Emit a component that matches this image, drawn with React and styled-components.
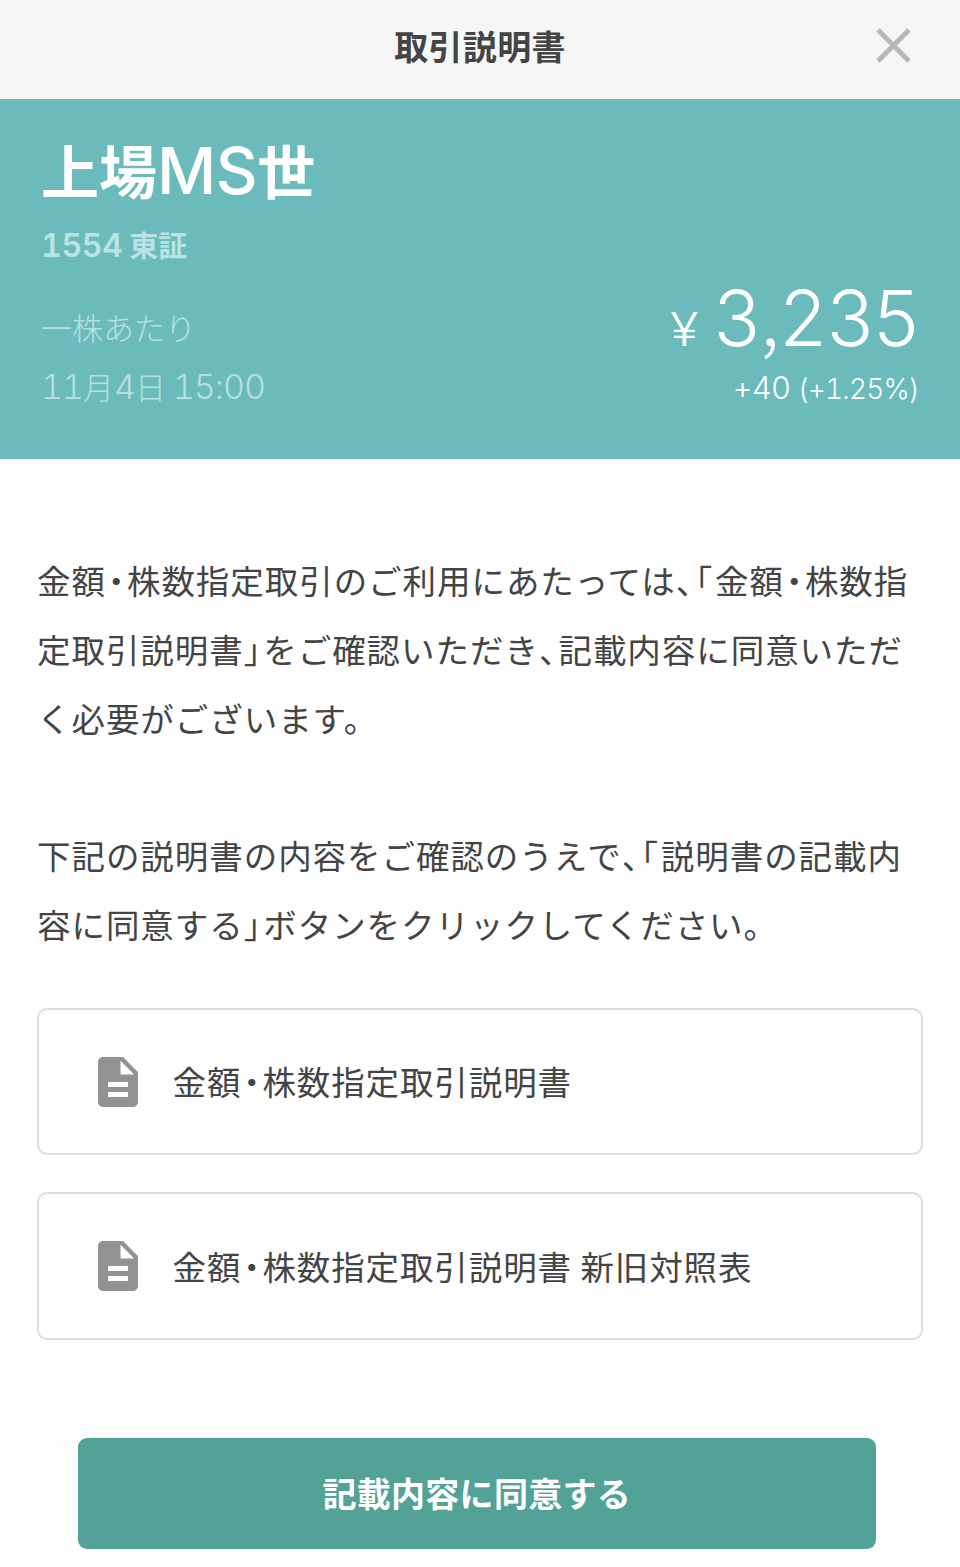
import styled, { createGlobalStyle } from 'styled-components';
import { MdClose, MdDescription } from 'react-icons/md';

const documents = [
    '金額・株数指定取引説明書',
    '金額・株数指定取引説明書 新旧対照表',
];

// Brackets, commas and middle dots are set at half width
function Tight({ children }) {
    return children.split(/([・、「」])/).map((part, i) => (
        /^[・、「」]$/.test(part) ? <Punct key={i} $dot={part === '・'}>{part}</Punct> : part
    ));
}

function App() {
    return (
        <>
            <GlobalStyle />
            <Page>
                <Header>
                    <Title>取引説明書</Title>
                    <CloseButton aria-label="閉じる"><MdClose size={59} /></CloseButton>
                </Header>
                <Stock>
                    <Name>上場<Latin $size={65} $weight={500} $spacing={-0.5}>MS</Latin>世</Name>
                    <Code><Latin $size={32} $weight={600} $spacing={-0.3}>1554</Latin> 東証</Code>
                    <PriceRow>
                        <Label>一株あたり</Label>
                        <Price><Yen>¥</Yen>3<Comma>,</Comma>235</Price>
                    </PriceRow>
                    <DateRow>
                        <DateText>
                            <Latin $size={34} $weight={300} $spacing={-1}>11</Latin>月<Latin $size={34} $weight={300} $spacing={-1}>4</Latin>日
                            {' '}<Latin $size={34} $weight={300} $spacing={-1}>15:00</Latin>
                        </DateText>
                        <Change>+40 <small>(+1.25%)</small></Change>
                    </DateRow>
                </Stock>
                <Content>
                    <Text>
                        <Tight>金額・株数指定取引のご利用にあたっては、「金額・株数指</Tight><br />
                        <Tight>定取引説明書」をご確認いただき、記載内容に同意いただ</Tight><br />
                        <Tight>く必要がございます。</Tight>
                    </Text>
                    <Text>
                        <Tight>下記の説明書の内容をご確認のうえで、「説明書の記載内</Tight><br />
                        <Tight>容に同意する」ボタンをクリックしてください。</Tight>
                    </Text>
                    <List>
                        {documents.map((name) => (
                            <Document key={name}>
                                <MdDescription size={60} />
                                <DocumentName><Tight>{name}</Tight></DocumentName>
                            </Document>
                        ))}
                    </List>
                    <AgreeButton>記載内容に同意する</AgreeButton>
                </Content>
            </Page>
        </>
    );
}

const GlobalStyle = createGlobalStyle`
* {
    box-sizing: border-box;
}
body {
    margin: 0;
    background: #fefefe;
    color: #444;
    font-family: "Noto Sans CJK JP", sans-serif;
}
`;

const Page = styled.div`
width: 960px;
height: 1567px;
overflow: hidden;
white-space: nowrap;
`;

const Header = styled.header`
display: grid;
grid-template-columns: 1fr auto 1fr;
align-items: center;
height: 99px;
padding: 0 37px 8px;
background: #f6f6f6;
`;

const Title = styled.h1`
grid-column: 2;
margin: 0;
font-size: 34px;
line-height: 48px;
font-weight: 700;
letter-spacing: 0.3px;
`;

const CloseButton = styled.button`
justify-self: end;
display: flex;
padding: 0 0 1px;
border: 0;
background: none;
color: #b8b8b8;
`;

const Stock = styled.section`
height: 359.5px;
padding: 31px 41px 0;
background: #6bbabc;
color: #fff;
`;

const Latin = styled.span`
font-family: Inter, sans-serif;
font-size: ${(props) => props.$size}px;
font-weight: ${(props) => props.$weight};
font-variant-numeric: tabular-nums;
letter-spacing: ${(props) => props.$spacing || 0}px;
`;

const Name = styled.h2`
margin: 0;
font-size: 58px;
line-height: 78px;
font-weight: 700;
`;

const Code = styled.div`
margin-top: 14px;
font-size: 29px;
line-height: 40px;
font-weight: 700;
color: #bce3e3;
`;

const PriceRow = styled.div`
display: flex;
justify-content: space-between;
height: 90px;
`;

const Label = styled.div`
margin-top: 39px;
font-size: 31px;
line-height: 44px;
font-weight: 300;
color: #b8e0e0;
`;

const Price = styled.div`
margin-top: 4px;
font-family: Inter, sans-serif;
font-size: 77px;
line-height: 96px;
font-weight: 300;
`;

const Yen = styled.span`
display: inline-block;
margin-right: 17px;
font-size: 46px;
line-height: 1;
transform: scaleX(1.14);
`;

const Comma = styled.span`
font-family: "Noto Sans CJK JP", sans-serif;
line-height: 1;
`;

const DateRow = styled.div`
display: flex;
justify-content: space-between;
align-items: baseline;
margin-top: 8px;
line-height: 44px;
`;

const DateText = styled.div`
font-size: 31px;
font-weight: 300;
color: #b8e0e0;
`;

const Change = styled.div`
font-family: Inter, sans-serif;
font-size: 31px;
font-weight: 300;
font-variant-numeric: tabular-nums;
letter-spacing: -0.85px;

small {
    font-size: 28px;
}
`;

const Content = styled.main`
padding: 87.5px 37px 0;
`;

const Text = styled.p`
margin: 0 0 69px;
font-size: 33.5px;
line-height: 68.8px;
letter-spacing: 0.95px;
`;

const Punct = styled.span`
font-feature-settings: "halt";
letter-spacing: ${(props) => (props.$dot ? 2.3 : 2.8)}px;
margin-left: ${(props) => (props.$dot ? 2 : 0)}px;
`;

const List = styled.div`
display: grid;
gap: 37px;
margin-top: -20px;
`;

const Document = styled.a`
display: flex;
align-items: center;
height: 147.5px;
padding-left: 49px;
border: 2px solid #ddd;
border-radius: 10px;

svg {
    color: #929292;
}
`;

const DocumentName = styled.span`
margin: 0 0 2px 24.5px;
font-size: 33.5px;
letter-spacing: 0.9px;
`;

const AgreeButton = styled.button`
display: block;
width: 797.5px;
height: 111px;
margin: 98px 0 0 41px;
padding: 0 0 2px;
border: 0;
border-radius: 9px;
background: #52a298;
color: #fff;
font-family: inherit;
font-size: 34px;
font-weight: 700;
letter-spacing: 0.3px;
`;

export default App;
